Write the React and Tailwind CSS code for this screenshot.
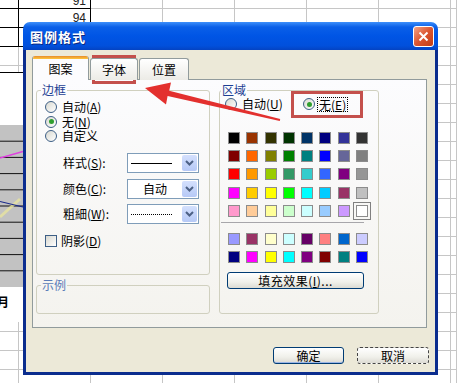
import React from "react";

// Excel 调色板
const PALETTE = [
  ["bg-[#000000]", "bg-[#993300]", "bg-[#333300]", "bg-[#003300]", "bg-[#003366]", "bg-[#000080]", "bg-[#333399]", "bg-[#333333]"],
  ["bg-[#800000]", "bg-[#ff6600]", "bg-[#808000]", "bg-[#008000]", "bg-[#008080]", "bg-[#0000ff]", "bg-[#666699]", "bg-[#808080]"],
  ["bg-[#ff0000]", "bg-[#ff9900]", "bg-[#99cc00]", "bg-[#339966]", "bg-[#33cccc]", "bg-[#3366ff]", "bg-[#800080]", "bg-[#969696]"],
  ["bg-[#ff00ff]", "bg-[#ffcc00]", "bg-[#ffff00]", "bg-[#00ff00]", "bg-[#00ffff]", "bg-[#00ccff]", "bg-[#993366]", "bg-[#c0c0c0]"],
  ["bg-[#ff99cc]", "bg-[#ffcc99]", "bg-[#ffff99]", "bg-[#ccffcc]", "bg-[#ccffff]", "bg-[#99ccff]", "bg-[#cc99ff]", "bg-[#ffffff]"],
];

const CHART_COLORS = [
  ["bg-[#9999ff]", "bg-[#993366]", "bg-[#ffffcc]", "bg-[#ccffff]", "bg-[#660066]", "bg-[#ff8080]", "bg-[#0066cc]", "bg-[#ccccff]"],
  ["bg-[#000080]", "bg-[#ff00ff]", "bg-[#ffff00]", "bg-[#00ffff]", "bg-[#800080]", "bg-[#800000]", "bg-[#008080]", "bg-[#0000ff]"],
];

function Sheet() {
  const cols = 8;
  const rows = 21;
  return (
    <div className="grid grid-cols-[19px_repeat(6,72px)_1fr] grid-rows-[9px_repeat(20,19px)] font-['Liberation_Sans',sans-serif] text-[12px] text-[#222]">
      {Array.from({ length: rows * cols }).map((_, i) => {
        const r = Math.floor(i / cols);
        const c = i % cols;
        const dark = c <= 1 && r <= 2;
        return (
          <div
            key={i}
            className={`flex justify-end overflow-hidden border-b border-r pr-[4px] ${
              dark ? "border-black" : "border-[#c6c6c6]"
            } ${r === 0 ? "items-start" : "items-center"}`}
          >
            {r === 0 && c === 1 && <span className="mt-[-5px] leading-[12px]">91</span>}
            {r === 1 && c === 1 && <span className="leading-[12px]">94</span>}
          </div>
        );
      })}
    </div>
  );
}

// 表格左侧露出的图表一角
function ChartStub() {
  return (
    <div className="absolute left-0 top-[72px] flex h-[250px] w-[23px] flex-col overflow-hidden border-t border-black bg-white">
      <div className="h-[52px] shrink-0" />
      <div className="relative h-[162px] shrink-0 bg-[#c2c2c2]">
        <svg width="23" height="162" viewBox="0 0 23 162" className="absolute inset-0">
          {[16.2, 32.4, 48.6, 64.8, 81, 97.2, 113.4, 129.6, 145.8].map((y) => (
            <line key={y} x1="0" x2="23" y1={y} y2={y} stroke="#111" strokeWidth="1" />
          ))}
          <line x1="0" y1="33" x2="23" y2="26.5" stroke="#e040e0" strokeWidth="1.5" />
          <line x1="0" y1="92" x2="20" y2="74" stroke="#e8e4a0" strokeWidth="3" opacity="0.8" />
          <line x1="0" y1="76.5" x2="23" y2="82" stroke="#1a2a8a" strokeWidth="1.2" />
        </svg>
      </div>
      <div className="ml-[-3px] mt-[9px] text-[12px] font-bold leading-[12px]">月</div>
    </div>
  );
}

function Radio({ checked }) {
  return (
    <span className="flex h-[12px] w-[12px] shrink-0 items-center justify-center rounded-full border border-[#3d5f86] bg-[linear-gradient(135deg,#d8d8d0,#ffffff)]">
      {checked && <span className="h-[5px] w-[5px] rounded-full bg-[#2f9f2f]" />}
    </span>
  );
}

function Chevron() {
  return (
    <svg width="9" height="6" viewBox="0 0 9 6">
      <path d="M1 1 L4.5 4.5 L8 1" fill="none" stroke="#4d6185" strokeWidth="2" />
    </svg>
  );
}

function Dropdown({ children }) {
  return (
    <div className="flex h-[20px] w-[72px] items-stretch border border-[#7f9db9] bg-white">
      <div className="flex flex-1 items-center justify-center leading-[14px]">{children}</div>
      <div className="my-[1px] mr-[1px] flex w-[15px] items-center justify-center rounded-[2px] bg-[linear-gradient(180deg,#d4e0fd,#b6c9f6)]">
        <Chevron />
      </div>
    </div>
  );
}

function Swatch({ color, selected }) {
  return (
    <div
      className={`h-[12px] w-[12px] border border-[#8c8c8c] ${color} ${
        selected ? "outline outline-1 outline-offset-[2px] outline-[#808080]" : ""
      }`}
    />
  );
}

function XpButton({ children, focus, width }) {
  return (
    <div
      className={`flex h-[17px] items-center justify-center rounded-[3px] bg-[linear-gradient(180deg,#ffffff,#f0f0ea_60%,#dcdbd3)] leading-[14px] ${width} ${
        focus ? "border border-dashed border-[#444]" : "border border-[#003c74] shadow-[inset_0_-1px_0_#9cb6e6]"
      }`}
    >
      {children}
    </div>
  );
}

function Dialog() {
  return (
    <div className="absolute left-[23px] top-[22px] flex h-[353px] w-[415px] flex-col">
      {/* 标题栏 */}
      <div className="flex h-[28px] shrink-0 items-center justify-between rounded-t-[7px] bg-[linear-gradient(180deg,#3d8ffa_0%,#0a5fe8_18%,#0055e5_50%,#0150dc_85%,#0443c2_100%)] pl-[7px] pr-[4px] pt-[1px]">
        <span className="text-[13px] font-bold leading-[16px] tracking-[1px] text-white [text-shadow:1px_1px_0_#0b2a80]">图例格式</span>
        <div className="flex h-[21px] w-[21px] items-center justify-center rounded-[3px] border border-white bg-[linear-gradient(135deg,#f2a285,#dc5530_50%,#c23d16)]">
          <svg width="11" height="11" viewBox="0 0 11 11">
            <path d="M1.5 1.5 L9.5 9.5 M9.5 1.5 L1.5 9.5" stroke="#fff" strokeWidth="2" />
          </svg>
        </div>
      </div>

      <div className="flex flex-1 flex-col border-x-[3px] border-b-[3px] border-[#0b2d8e] bg-[#ece9d8] px-[6px] pt-[6px] leading-[14px]">
        {/* 选项卡 */}
        <div className="relative z-10 flex h-[24px] items-end gap-[1px]">
          <div className="flex h-[24px] w-[57px] flex-col overflow-hidden rounded-t-[3px] border-x border-[#919b9c] bg-[#fcfcfe]">
            <div className="h-[3px] bg-[linear-gradient(180deg,#e68b2c,#ffc73c)]" />
            <div className="flex flex-1 items-center justify-center pb-[1px]">图案</div>
          </div>
          <div className="flex h-[22px] w-[48px] items-center justify-center rounded-t-[3px] border border-b-0 border-[#919b9c] bg-[linear-gradient(180deg,#ffffff,#ecebe6)]">
            字体
          </div>
          <div className="flex h-[22px] w-[50px] items-center justify-center rounded-t-[3px] border border-b-0 border-[#919b9c] bg-[linear-gradient(180deg,#ffffff,#ecebe6)]">
            位置
          </div>
        </div>

        {/* 面板 */}
        <div className="-mt-px flex h-[249px] w-[395px] gap-[9px] border border-[#919b9c] bg-[linear-gradient(180deg,#fcfcfe,#f4f3ee)] pl-[3px] pt-[3px]">
          <div className="flex w-[174px] flex-col gap-[3px]">
            <fieldset className="h-[192px] min-w-0 rounded-[3px] border border-[#d0d0bf]">
              <legend className="ml-[4px] px-[1px] leading-[14px] text-[#1c3f94]">边框</legend>
              <div className="flex flex-col pl-[8px] pt-[3px]">
                <div className="flex h-[14.5px] items-center gap-[5px]">
                  <Radio />
                  <span>自动(<span className="underline">A</span>)</span>
                </div>
                <div className="flex h-[14.5px] items-center gap-[5px]">
                  <Radio checked />
                  <span>无(<span className="underline">N</span>)</span>
                </div>
                <div className="flex h-[14.5px] items-center gap-[5px]">
                  <Radio />
                  <span>自定义</span>
                </div>

                <div className="mt-[9.5px] flex flex-col gap-[5.5px]">
                  <div className="flex h-[20px] items-center">
                    <span className="w-[82px] pl-[18px]">样式(<span className="underline">S</span>):</span>
                    <Dropdown>
                      <div className="ml-[-8px] h-px w-[41px] bg-black" />
                    </Dropdown>
                  </div>
                  <div className="flex h-[20px] items-center">
                    <span className="w-[82px] pl-[18px]">颜色(<span className="underline">C</span>):</span>
                    <Dropdown>
                      <span>自动</span>
                    </Dropdown>
                  </div>
                  <div className="flex h-[20px] items-center">
                    <span className="w-[82px] pl-[18px]">粗細(<span className="underline">W</span>):</span>
                    <Dropdown>
                      <div className="ml-[-8px] w-[41px] border-t border-dotted border-black" />
                    </Dropdown>
                  </div>
                </div>

                <div className="mt-[11px] flex h-[12px] items-center gap-[4px]">
                  <span className="h-[12px] w-[12px] border border-[#3d5f86] bg-[linear-gradient(135deg,#d8d8d0,#ffffff)]" />
                  <span>阴影(<span className="underline">D</span>)</span>
                </div>
              </div>
            </fieldset>

            <fieldset className="h-[36px] min-w-0 rounded-[3px] border border-[#d0d0bf]">
              <legend className="ml-[4px] px-[1px] leading-[14px] text-[#5b7cb8]">示例</legend>
            </fieldset>
          </div>

          <fieldset className="h-[231px] w-[160px] min-w-0 rounded-[3px] border border-[#d0d0bf]">
            <legend className="ml-[1px] px-[1px] leading-[14px] text-[#1c3f94]">区域</legend>
            <div className="flex h-[14px] items-center pl-[5px]">
              <div className="flex w-[78px] items-center gap-[5px]">
                <Radio />
                <span>自动(<span className="underline">U</span>)</span>
              </div>
              <div className="flex items-center gap-[2px]">
                <Radio checked />
                <span className="border border-dotted border-black px-[1px] leading-[13px]">
                  无(<span className="underline">E</span>)
                </span>
              </div>
            </div>

            <div className="ml-[8px] mt-[21px] grid grid-cols-[repeat(8,12px)] gap-x-[6.3px] gap-y-[6.2px]">
              {PALETTE.flatMap((row, r) =>
                row.map((c, i) => <Swatch key={`${r}-${i}`} color={c} selected={r === 4 && i === 7} />)
              )}
            </div>

            <div className="ml-[1px] mt-[5.5px] h-px w-[143px] bg-[#a7a6aa]" />

            <div className="ml-[8px] mt-[10px] grid grid-cols-[repeat(8,12px)] gap-x-[6.3px] gap-y-[6.2px]">
              {CHART_COLORS.flatMap((row, r) => row.map((c, i) => <Swatch key={`${r}-${i}`} color={c} />))}
            </div>

            <div className="ml-[7px] mt-[9px] flex h-[17px] w-[137px] items-center justify-center rounded-[3px] border border-[#003c74] bg-[linear-gradient(180deg,#ffffff,#f0f0ea_60%,#dcdbd3)] tracking-[0.5px]">
              填充效果(<span className="underline">I</span>)...
            </div>
          </fieldset>
        </div>

        {/* 确定 / 取消 */}
        <div className="mt-[19px] flex justify-end gap-[13px]">
          <XpButton width="w-[71px]">确定</XpButton>
          <XpButton width="w-[72px]" focus>
            取消
          </XpButton>
        </div>
      </div>
    </div>
  );
}

// 教程截图里的红框和箭头
function Annotations() {
  return (
    <>
      <div className="absolute left-[92px] top-[55px] h-[29px] w-[44px] border-[3px] border-[#c4504c]" />
      <div className="absolute left-[291px] top-[91px] h-[27px] w-[72px] border-[3px] border-[#c4504c]" />
      <svg className="pointer-events-none absolute left-0 top-0" width="457" height="383" viewBox="0 0 457 383">
        <polygon
          points="145,88 171,82.5 169.2,90.8 280.2,119 279.8,121 167.6,96 166,104.5"
          fill="#e3302e"
        />
      </svg>
    </>
  );
}

export default function App() {
  return (
    <div className="relative h-[383px] w-[457px] overflow-hidden bg-white font-['Noto_Sans_CJK_SC',sans-serif] text-[12px] text-black">
      <Sheet />
      <ChartStub />
      <Dialog />
      <Annotations />
    </div>
  );
}
